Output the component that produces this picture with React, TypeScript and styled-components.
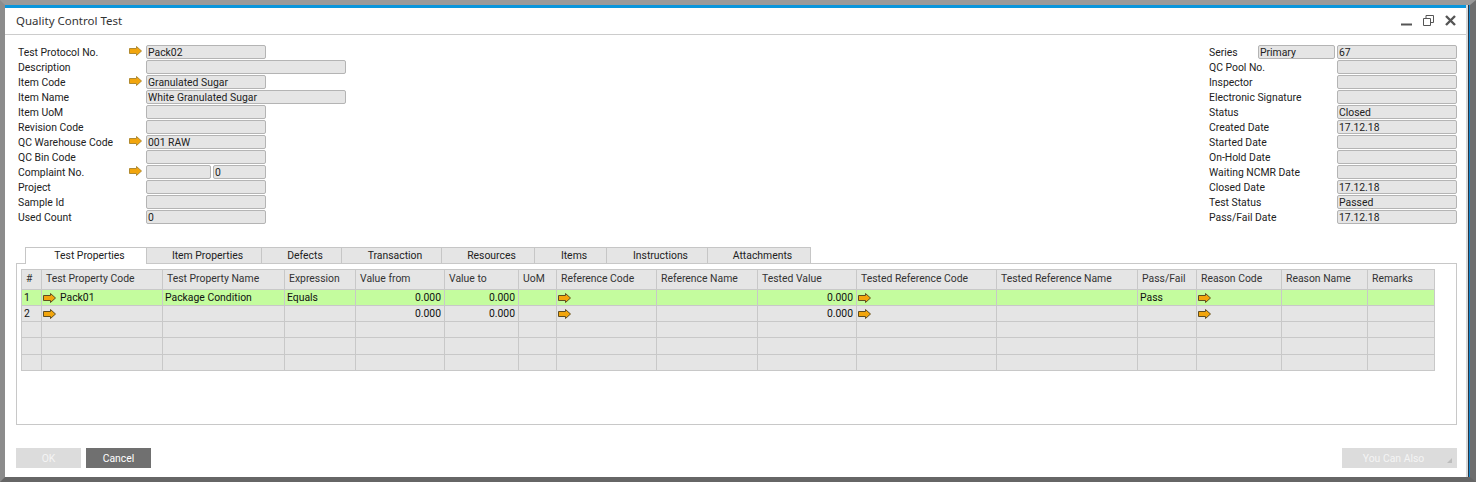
import styled, { createGlobalStyle } from 'styled-components'

const GlobalStyle = createGlobalStyle`
  html, body {
    margin: 0;
    padding: 0;
    background: #fff;
  }
  * {
    box-sizing: border-box;
  }
`

const Frame = styled.div`
  width: 1476px;
  height: 482px;
  display: flex;
  background: #fff;
  border-style: solid;
  border-width: 5px 6px 5px 5px;
  border-color: #9a9a9a #6e6e6e #666 #8c8c8c;
  font-family: Roboto, 'Liberation Sans', sans-serif;
  font-size: 10.4px;
  color: #222;
  overflow: hidden;
`

const Shell = styled.div`
  flex: 1;
  display: flex;
  padding-right: 1px;
  background: #2a3440;
  border-right: 1px solid #1487d0;
`

const Window = styled.div`
  flex: 1;
  display: flex;
  flex-direction: column;
  background: #fff;
  border-right: 2px solid #d8d8d8;
  padding-bottom: 9px;
`

const TitleBar = styled.div`
  height: 30px;
  flex: none;
  display: flex;
  align-items: center;
  justify-content: space-between;
  padding: 0 10px 2px 11px;
  border-top: 3px solid #0a96dc;
  border-bottom: 1px solid #ccc;
  font-family: 'Noto Sans', sans-serif;
  font-size: 11.5px;
  color: #333;
`

const WindowButtons = styled.div`
  display: flex;
  align-items: center;
  gap: 11px;
`

const Header = styled.div`
  display: flex;
  justify-content: space-between;
  padding: 10px 9px 0 13px;
`

const FormColumn = styled.div`
  display: flex;
  flex-direction: column;
`

const FormRow = styled.div<{ $labelWidth: number }>`
  height: 15px;
  display: grid;
  grid-template-columns: ${p => p.$labelWidth}px auto;
  align-items: start;
  justify-content: start;
`

const Label = styled.span`
  line-height: 16px;
  white-space: nowrap;
`

const ArrowSlot = styled.span`
  position: absolute;
  left: -17px;
  top: 1px;
  display: flex;
`

const FieldSlot = styled.div`
  position: relative;
  display: flex;
  gap: 2px;
`

const Field = styled.div<{ $width: number }>`
  width: ${p => p.$width}px;
  height: 14px;
  padding: 0 1px;
  line-height: 13px;
  background: #e5e5e5;
  border: 1px solid #b4b4b4;
  border-radius: 2px;
  white-space: nowrap;
  overflow: hidden;
`

const Tabs = styled.div`
  display: flex;
  margin: 22px 0 0 20px;
  position: relative;
  z-index: 1;
`

const Tab = styled.div<{ $width: number; $active?: boolean }>`
  width: ${p => p.$width}px;
  height: ${p => (p.$active ? 17 : 16)}px;
  margin-bottom: ${p => (p.$active ? -1 : 0)}px;
  padding: 0 0 ${p => (p.$active ? 1 : 0)}px 7px;
  display: flex;
  align-items: center;
  justify-content: center;
  background: ${p => (p.$active ? '#fff' : '#e5e5e5')};
  border: 1px solid #c6c6c6;
  border-left-width: ${p => (p.$active ? 1 : 0)}px;
  border-bottom-width: 0;
`

const Panel = styled.div`
  height: 162px;
  margin: 0 9px 0 11px;
  padding: 5px 21px 0 4px;
  background: #fff;
  border: 1px solid #c8c8c8;
`

const Table = styled.div`
  display: grid;
  grid-template-columns: 20px 121px 122px 71px 89px 74px 38px 100px 101px 99px 140px 141px 59px 85px 86px 67px;
  grid-template-rows: 20px 16px 16px 16px 17px 16px;
  border-top: 1px solid #c8c8c8;
  border-left: 1px solid #c8c8c8;
`

const HeadCell = styled.div`
  padding: 0 4px 2px;
  display: flex;
  align-items: center;
  background: #e5e5e5;
  border-right: 1px solid #c8c8c8;
  border-bottom: 1px solid #c8c8c8;
  color: #333;
  white-space: nowrap;
  overflow: hidden;
`

const Cell = styled.div<{ $selected?: boolean; $right?: boolean }>`
  display: flex;
  align-items: center;
  justify-content: ${p => (p.$right ? 'flex-end' : 'flex-start')};
  gap: 4px;
  padding: 0 3px 0 2px;
  background: ${p => (p.$selected ? '#c4fc9e' : '#e5e5e5')};
  border-right: 1px solid #c8c8c8;
  border-bottom: 1px solid #c8c8c8;
  color: #111;
  white-space: nowrap;
  overflow: hidden;

  > svg {
    margin-left: -1px;
  }
`

const Footer = styled.div`
  margin-top: auto;
  display: flex;
  align-items: center;
  gap: 5px;
  padding: 0 9px 0 11px;
`

const Button = styled.div<{ $dark?: boolean }>`
  width: 65px;
  height: 20px;
  display: flex;
  align-items: center;
  justify-content: center;
  background: ${p => (p.$dark ? '#707070' : '#dcdcdc')};
  color: ${p => (p.$dark ? '#fff' : '#f4f4f4')};
`

const MenuButton = styled(Button)`
  position: relative;
  width: 115px;
  margin-left: auto;
  padding-right: 12px;
`

const Grip = styled.svg`
  position: absolute;
  right: 5px;
  bottom: 5px;
`

const ArrowIcon = styled.svg`
  flex: none;
`

function LinkArrow({ outline = '#5e4d22' }: { outline?: string }) {
  return (
    <ArrowIcon width="13" height="10" viewBox="0 0 13 10">
      <path d="M.5 2.5H7.5V.5L12.5 5 7.5 9.5V7.5H.5Z" fill="#f2a50c" stroke={outline} />
    </ArrowIcon>
  )
}

type FormItem = { label: string; values?: [string, number][]; arrow?: boolean }

const LEFT_ROWS: FormItem[] = [
  { label: 'Test Protocol No.', values: [['Pack02', 120]], arrow: true },
  { label: 'Description', values: [['', 200]] },
  { label: 'Item Code', values: [['Granulated Sugar', 120]], arrow: true },
  { label: 'Item Name', values: [['White Granulated Sugar', 200]] },
  { label: 'Item UoM', values: [['', 120]] },
  { label: 'Revision Code', values: [['', 120]] },
  { label: 'QC Warehouse Code', values: [['001 RAW', 120]], arrow: true },
  { label: 'QC Bin Code', values: [['', 120]] },
  { label: 'Complaint No.', values: [['', 65], ['0', 53]], arrow: true },
  { label: 'Project', values: [['', 120]] },
  { label: 'Sample Id', values: [['', 120]] },
  { label: 'Used Count', values: [['0', 120]] },
]

const RIGHT_ROWS: FormItem[] = [
  { label: 'Series', values: [['Primary', 77], ['67', 120]] },
  { label: 'QC Pool No.' },
  { label: 'Inspector' },
  { label: 'Electronic Signature' },
  { label: 'Status', values: [['Closed', 120]] },
  { label: 'Created Date', values: [['17.12.18', 120]] },
  { label: 'Started Date' },
  { label: 'On-Hold Date' },
  { label: 'Waiting NCMR Date' },
  { label: 'Closed Date', values: [['17.12.18', 120]] },
  { label: 'Test Status', values: [['Passed', 120]] },
  { label: 'Pass/Fail Date', values: [['17.12.18', 120]] },
]

const TABS: [string, number][] = [
  ['Test Properties', 122],
  ['Item Properties', 115],
  ['Defects', 80],
  ['Transaction', 100],
  ['Resources', 93],
  ['Items', 72],
  ['Instructions', 101],
  ['Attachments', 103],
]

const COLUMNS = [
  '#', 'Test Property Code', 'Test Property Name', 'Expression', 'Value from', 'Value to', 'UoM',
  'Reference Code', 'Reference Name', 'Tested Value', 'Tested Reference Code', 'Tested Reference Name',
  'Pass/Fail', 'Reason Code', 'Reason Name', 'Remarks',
]

function DataRow({ index, filled, blank }: { index: number; filled?: boolean; blank?: boolean }) {
  const arrow = blank ? null : <LinkArrow />
  const number = blank ? '' : '0.000'
  return (
    <>
      <Cell $selected={filled}>{blank ? '' : index}</Cell>
      <Cell $selected={filled}>{arrow}{filled && 'Pack01'}</Cell>
      <Cell $selected={filled}>{filled && 'Package Condition'}</Cell>
      <Cell $selected={filled}>{filled && 'Equals'}</Cell>
      <Cell $selected={filled} $right>{number}</Cell>
      <Cell $selected={filled} $right>{number}</Cell>
      <Cell $selected={filled} />
      <Cell $selected={filled}>{arrow}</Cell>
      <Cell $selected={filled} />
      <Cell $selected={filled} $right>{number}</Cell>
      <Cell $selected={filled}>{arrow}</Cell>
      <Cell $selected={filled} />
      <Cell $selected={filled}>{filled && 'Pass'}</Cell>
      <Cell $selected={filled}>{arrow}</Cell>
      <Cell $selected={filled} />
      <Cell $selected={filled} />
    </>
  )
}

export default function App() {
  return (
    <Frame>
      <GlobalStyle />
      <Shell>
        <Window>
          <TitleBar>
            <span>Quality Control Test</span>
            <WindowButtons>
              <svg width="11" height="11" viewBox="0 0 11 11">
                <path d="M0 9.5H11" stroke="#555" strokeWidth="2" />
              </svg>
              <svg width="11" height="11" viewBox="0 0 11 11" fill="none">
                <path d="M.5 3.5H7.5V10.5H.5ZM3 3V.5H10.5V7.5H8" stroke="#555" />
              </svg>
              <svg width="11" height="11" viewBox="0 0 11 11">
                <path d="M1 1L10 10M10 1L1 10" stroke="#555" strokeWidth="2.4" />
              </svg>
            </WindowButtons>
          </TitleBar>
          <Header>
            <FormColumn>
              {LEFT_ROWS.map(row => (
                <FormRow key={row.label} $labelWidth={128}>
                  <Label>{row.label}</Label>
                  <FieldSlot>
                    {row.arrow && <ArrowSlot><LinkArrow outline="#b08a30" /></ArrowSlot>}
                    {row.values?.map(([value, width], i) => <Field key={i} $width={width}>{value}</Field>)}
                  </FieldSlot>
                </FormRow>
              ))}
            </FormColumn>
            <FormColumn>
              {RIGHT_ROWS.map(row => (
                <FormRow key={row.label} $labelWidth={row.label === 'Series' ? 49 : 128}>
                  <Label>{row.label}</Label>
                  <FieldSlot>
                    {(row.values ?? [['', 120] as [string, number]]).map(([value, width], i) => (
                      <Field key={i} $width={width}>{value}</Field>
                    ))}
                  </FieldSlot>
                </FormRow>
              ))}
            </FormColumn>
          </Header>
          <Tabs>
            {TABS.map(([name, width], i) => (
              <Tab key={name} $width={width} $active={i === 0}>{name}</Tab>
            ))}
          </Tabs>
          <Panel>
            <Table>
              {COLUMNS.map(name => <HeadCell key={name}>{name}</HeadCell>)}
              <DataRow index={1} filled />
              <DataRow index={2} />
              <DataRow index={3} blank />
              <DataRow index={4} blank />
              <DataRow index={5} blank />
            </Table>
          </Panel>
          <Footer>
            <Button>OK</Button>
            <Button $dark>Cancel</Button>
            <MenuButton>
              You Can Also
              <Grip width="5" height="5" viewBox="0 0 5 5"><path d="M5 0V5H0Z" fill="#bdbdbd" /></Grip>
            </MenuButton>
          </Footer>
        </Window>
      </Shell>
    </Frame>
  )
}
